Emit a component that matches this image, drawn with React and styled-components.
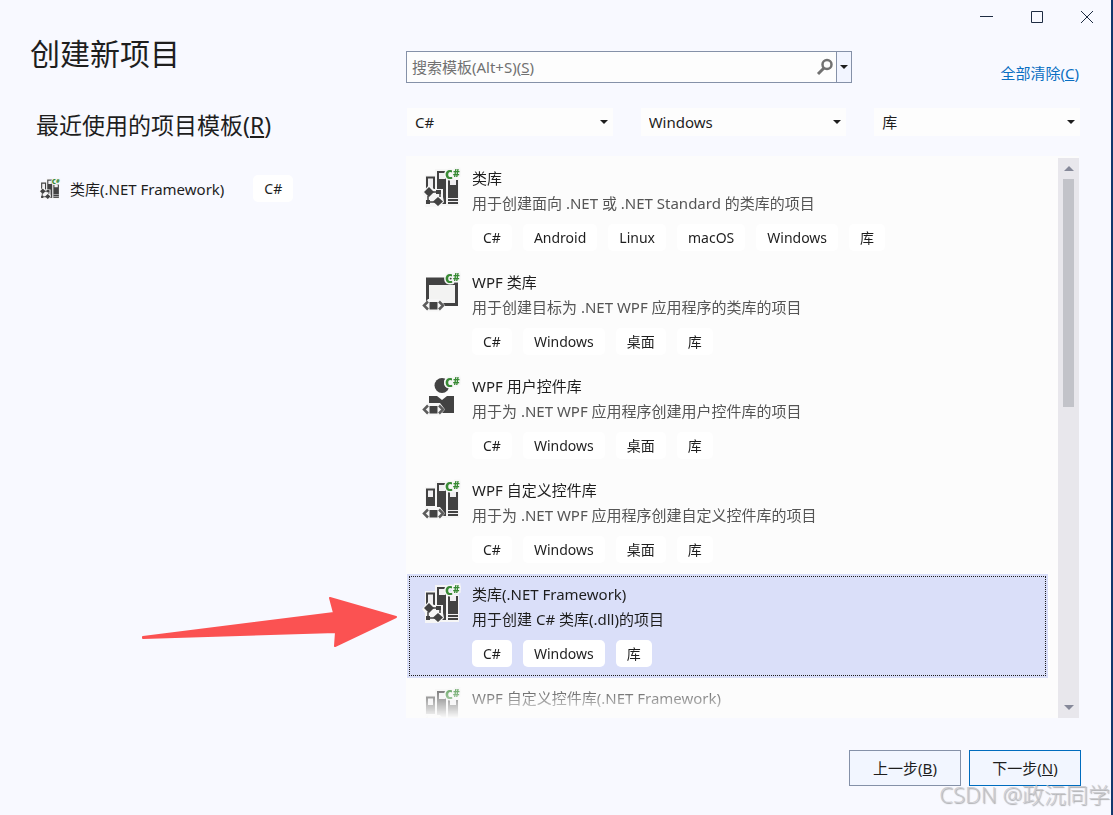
import React, { useState } from 'react'
import styled, { createGlobalStyle } from 'styled-components';

const GlobalStyle = createGlobalStyle`
  * {
    box-sizing: border-box;
  }
  body {
    margin: 0;
    background: #f8f9ff;
    color: #1e1e1e;
    font-family: "Noto Sans", "Noto Sans CJK SC", sans-serif;
    font-size: 15px;
    line-height: 20px;
  }
  button, input, select {
    font: inherit;
    color: inherit;
  }
`;

const Window = styled.div`
  position: relative;
  display: flex;
  flex-direction: column;
  height: 100vh;
  min-height: 480px;
  overflow: hidden;
  padding: 0 30px 29px;
  background: #f8f9ff;
  border-right: 2px solid #12396d;
`;

const TitleBar = styled.div`
  display: flex;
  justify-content: flex-end;
  height: 34px;
  margin-right: -30px;
`;

const CaptionButton = styled.button`
  display: grid;
  place-items: center;
  width: 50px;
  padding: 0 0 0 2px;
  border: none;
  background: none;
`;

const Body = styled.div`
  display: grid;
  grid-template-columns: 376px minmax(0, 1fr);
  flex: 1;
  min-height: 0;
`;

const Sidebar = styled.aside`
  min-width: 0;
`;

const Title = styled.h1`
  margin: 0;
  font-size: 30px;
  font-weight: 400;
  line-height: 40px;
`;

const RecentTitle = styled.h2`
  margin: 34px 0 0 6px;
  font-size: 23px;
  font-weight: 400;
  line-height: 34px;
`;

const RecentItem = styled.button`
  display: flex;
  align-items: center;
  margin: 33px 0 0 10px;
  padding: 0;
  border: none;
  background: none;
  white-space: nowrap;
  span:last-child {
    margin-left: 29px;
  }
`;

const RecentName = styled.span`
  margin-left: 10px;
`;

const Main = styled.main`
  display: flex;
  flex-direction: column;
  min-width: 0;
  min-height: 0;
`;

const SearchRow = styled.div`
  display: flex;
  justify-content: space-between;
  align-items: flex-start;
  margin-top: 17px;
`;

const SearchBox = styled.div`
  display: grid;
  grid-template-columns: minmax(0, 1fr) 22px 15px;
  width: 446px;
  height: 32px;
  border: 1px solid #8591a8;
  background: #fdfdfd;
`;

const SearchInput = styled.input`
  grid-area: 1 / 1;
  min-width: 0;
  padding: 0 5px;
  border: none;
  outline: none;
  background: none;
`;

const SearchLabel = styled.label`
  grid-area: 1 / 1;
  align-self: center;
  padding-left: 5px;
  color: #717171;
  pointer-events: none;
`;

const IconButton = styled.button`
  display: grid;
  place-items: center;
  padding: 0;
  border: none;
  border-left: ${props => props.split ? '1px solid #8591a8' : 'none'};
  background: ${props => props.split ? '#f2f5ff' : 'none'};
`;

const ClearLink = styled.a`
  margin: 12px 2px 0 0;
  color: #0a6fc2;
  text-decoration: none;
`;

const Filters = styled.div`
  display: grid;
  grid-template-columns: repeat(3, minmax(0, 1fr));
  gap: 28px;
  margin: 25px 1px 0;
`;

const Filter = styled.div`
  display: grid;
  grid-template-columns: minmax(0, 1fr) 18px;
  align-items: center;
  background: #fdfdfd;
  select {
    grid-area: 1 / 1 / 2 / 3;
    height: 28px;
    padding: 0 8px;
    border: none;
    appearance: none;
    background: none;
  }
  svg {
    grid-area: 1 / 2;
    justify-self: center;
    pointer-events: none;
  }
`;

const Panel = styled.div`
  display: flex;
  flex: 1;
  min-height: 0;
  margin: 20px 2px 0 0;
  padding-top: 2px;
  background: #fcfcfc;
`;

const TemplateList = styled.ul`
  flex: 1;
  min-width: 0;
  margin: 0 10px 0 1px;
  padding: 0;
  overflow: hidden;
  list-style: none;
  mask-image: linear-gradient(to bottom, #000 calc(100% - 40px), transparent);
`;

const TemplateButton = styled.button`
  display: flex;
  align-items: flex-start;
  gap: 12px;
  width: 100%;
  height: 104px;
  padding: 10px 17px;
  border: none;
  outline: 1px dotted ${props => props.selected ? '#1e1e1e' : 'transparent'};
  outline-offset: -3px;
  background: ${props => props.selected ? '#dadff9' : 'none'};
  text-align: left;
  svg {
    flex: none;
    margin-top: 2px;
  }
`;

const TemplateText = styled.span`
  display: flex;
  flex-direction: column;
  min-width: 0;
  white-space: nowrap;
`;

const Description = styled.span`
  margin-top: 5px;
  color: ${props => props.selected ? '#1e1e1e' : '#555'};
`;

const Tags = styled.span`
  display: flex;
  gap: 11px;
  margin-top: 11px;
`;

const Tag = styled.span`
  padding: 0 11px;
  border-radius: 5px;
  background: #fff;
  font-size: 14px;
  line-height: 27px;
`;

const ScrollBar = styled.div`
  display: flex;
  flex-direction: column;
  width: 21px;
  background: #e8e7ec;
  button {
    height: 21px;
  }
`;

const Track = styled.div`
  flex: 1;
  padding: 0 5px;
`;

const Thumb = styled.div`
  height: 44%;
  background: #c2c3c9;
`;

const Footer = styled.div`
  display: flex;
  justify-content: flex-end;
  gap: 8px;
  margin-top: 32px;
`;

const StepButton = styled.button`
  width: 112px;
  height: 36px;
  border: 1px solid ${props => props.primary ? '#006cbe' : '#8591a8'};
  background: #f2f6ff;
`;

const Pointer = styled.svg`
  position: absolute;
  left: 140px;
  top: 594px;
  pointer-events: none;
`;

const Watermark = styled.div`
  position: absolute;
  right: 1px;
  bottom: 6px;
  color: rgba(200, 200, 204, 0.85);
  font-size: 22px;
  font-weight: 300;
  line-height: 30px;
  text-shadow: 1px 1px 1px rgba(120, 120, 120, 0.6);
  white-space: nowrap;
  pointer-events: none;
`;

const ink = '#424242';
const halo = '#f6f6f6';

const Arrow = ({ up, color = '#1e1e1e', size = 8 }) => (
  <svg width={size} height={size / 2} viewBox="0 0 8 4" fill={color} aria-hidden="true">
    <path d={up ? 'M0 4h8L4 0z' : 'M0 0h8L4 4z'} />
  </svg>
);

const Badge = () => (
  <g fill="#388a34" stroke={halo} strokeWidth="3" paintOrder="stroke" fontFamily="Open Sans" fontWeight="800">
    <text x="21" y="9" fontSize="13">C</text>
    <text x="29" y="7" fontSize="10">#</text>
  </g>
);

const Brackets = () => (
  <g>
    <path d="M4 25h12l5 6.500-5 6H4l-5-6z" fill={halo} />
    <path d="M4 27.500l-4 4 4 4M15 27.500l4 4-4 4" fill="none" stroke="#5c5c5c" strokeWidth="2.500" />
    <path d="M5.500 28h8v7.500h-8z" fill={ink} />
  </g>
);

const Books = ({ filled }) => (
  <g>
    <path d="M1 5h10V-1h13v10h11v27H12V26H1z" fill={halo} />
    <path d="M3 7.500h7v15H3z" fill="#f0eff1" stroke={ink} strokeWidth="2" />
    {filled && <path d="M2 15h9v9H2z" fill={ink} />}
    <path d="M13 1h9v33h-9z" fill={ink} />
    <path d="M15 3h6v6h-6z" fill="#f0eff1" />
    <path d="M24 10h10v24H24z" fill={ink} />
    <path d="M26 10h6v5h-6zM24 28h10v1H24zM24 31h10v1H24z" fill="#f0eff1" />
  </g>
);

const Nodes = () => (
  <g>
    <path d="M5 15l5 4h9v8l1 5-5 5H1V27l-3-4z" fill={halo} />
    <path d="M5 17l5 5-5 5-5-5zM14 27l5 4.500-5 4.500-5-4.500z" fill={ink} />
    <path d="M8 22h8v5M4 26v6h7" fill="none" stroke={ink} strokeWidth="1.500" />
    <path d="M12 20h5v4h-5zM2 30h4v4H2z" fill={ink} />
  </g>
);

const TemplateIcon = ({ kind, size = 36 }) => (
  <svg width={size} height={size} viewBox="0 0 36 36" overflow="visible" aria-hidden="true">
    {kind === 'library' && <><Books /><Nodes /></>}
    {kind === 'custom' && <><Books filled /><Brackets /></>}
    {kind === 'window' && (
      <>
        <path d="M3.500 5h29v25.500h-29z" fill="#f3f3f2" stroke={ink} strokeWidth="3" />
        <path d="M2 4h32v7H2z" fill={ink} />
        <Brackets />
      </>
    )}
    {kind === 'user' && (
      <>
        <circle cx="18" cy="7.500" r="7.500" fill={ink} />
        <circle cx="26" cy="4.500" r="6" fill={halo} />
        <path d="M5 18h8l5 4 5-4h7v17H5z" fill={ink} />
        <Brackets />
      </>
    )}
    <Badge />
  </svg>
);

const templates = [
  { name: '类库', kind: 'library', text: '用于创建面向 .NET 或 .NET Standard 的类库的项目', tags: ['C#', 'Android', 'Linux', 'macOS', 'Windows', '库'] },
  { name: 'WPF 类库', kind: 'window', text: '用于创建目标为 .NET WPF 应用程序的类库的项目', tags: ['C#', 'Windows', '桌面', '库'] },
  { name: 'WPF 用户控件库', kind: 'user', text: '用于为 .NET WPF 应用程序创建用户控件库的项目', tags: ['C#', 'Windows', '桌面', '库'] },
  { name: 'WPF 自定义控件库', kind: 'custom', text: '用于为 .NET WPF 应用程序创建自定义控件库的项目', tags: ['C#', 'Windows', '桌面', '库'] },
  { name: '类库(.NET Framework)', kind: 'library', text: '用于创建 C# 类库(.dll)的项目', tags: ['C#', 'Windows', '库'] },
  { name: 'WPF 自定义控件库(.NET Framework)', kind: 'custom', text: '', tags: [] },
];

const filters = [
  { label: '语言', value: 'C#' },
  { label: '平台', value: 'Windows' },
  { label: '项目类型', value: '库' },
];

export default function App() {
  const [selected, setSelected] = useState(4);
  const [search, setSearch] = useState('');

  return (
    <Window>
      <GlobalStyle />
      <TitleBar>
        <CaptionButton aria-label="最小化">
          <svg width="14" height="14" stroke="#1e2c42"><path d="M0 6.500h13" /></svg>
        </CaptionButton>
        <CaptionButton aria-label="最大化">
          <svg width="14" height="14" stroke="#1e2c42" fill="none"><path d="M1.500 1.500h11v11h-11z" /></svg>
        </CaptionButton>
        <CaptionButton aria-label="关闭">
          <svg width="14" height="14" stroke="#1e2c42"><path d="M1 1l12 12M13 1L1 13" /></svg>
        </CaptionButton>
      </TitleBar>

      <Body>
        <Sidebar>
          <Title>创建新项目</Title>
          <RecentTitle>最近使用的项目模板(<u>R</u>)</RecentTitle>
          <RecentItem>
            <TemplateIcon kind="library" size={20} />
            <RecentName>类库(.NET Framework)</RecentName>
            <Tag>C#</Tag>
          </RecentItem>
        </Sidebar>

        <Main>
          <SearchRow>
            <SearchBox>
              <SearchInput id="search" value={search} onChange={e => setSearch(e.target.value)} />
              <SearchLabel htmlFor="search">{search === '' && <>搜索模板(Alt+S)(<u>S</u>)</>}</SearchLabel>
              <IconButton aria-label="搜索">
                <svg width="18" height="18" fill="none" stroke="#717171">
                  <circle cx="11" cy="6.500" r="4.500" strokeWidth="2.500" />
                  <path d="M8 10l-6 6" strokeWidth="3" />
                </svg>
              </IconButton>
              <IconButton split="true" aria-label="搜索选项"><Arrow /></IconButton>
            </SearchBox>
            <ClearLink href="#clear">全部清除(<u>C</u>)</ClearLink>
          </SearchRow>

          <Filters>
            {filters.map(f => (
              <Filter key={f.label}>
                <select aria-label={f.label} defaultValue={f.value}>
                  <option>{f.value}</option>
                </select>
                <Arrow />
              </Filter>
            ))}
          </Filters>

          <Panel>
            <TemplateList>
              {templates.map((t, i) => (
                <li key={t.name}>
                  <TemplateButton selected={i === selected} onClick={() => setSelected(i)}>
                    <TemplateIcon kind={t.kind} />
                    <TemplateText>
                      <span>{t.name}</span>
                      <Description selected={i === selected}>{t.text}</Description>
                      <Tags>{t.tags.map(tag => <Tag key={tag}>{tag}</Tag>)}</Tags>
                    </TemplateText>
                  </TemplateButton>
                </li>
              ))}
            </TemplateList>
            <ScrollBar>
              <IconButton aria-label="向上滚动"><Arrow up color="#868999" size={10} /></IconButton>
              <Track><Thumb /></Track>
              <IconButton aria-label="向下滚动"><Arrow color="#868999" size={10} /></IconButton>
            </ScrollBar>
          </Panel>
        </Main>
      </Body>

      <Footer>
        <StepButton>上一步(<u>B</u>)</StepButton>
        <StepButton primary="true">下一步(<u>N</u>)</StepButton>
      </Footer>

      <Pointer width="260" height="56" viewBox="0 0 260 56" fill="#fb5252" stroke="#fb5252" strokeWidth="2" strokeLinejoin="round" aria-hidden="true">
        <path d="M3 43L194 19l-4-15 66 19-61 29 1-14L3 44z" />
      </Pointer>
      <Watermark>CSDN @政沅同学</Watermark>
    </Window>
  )
}
